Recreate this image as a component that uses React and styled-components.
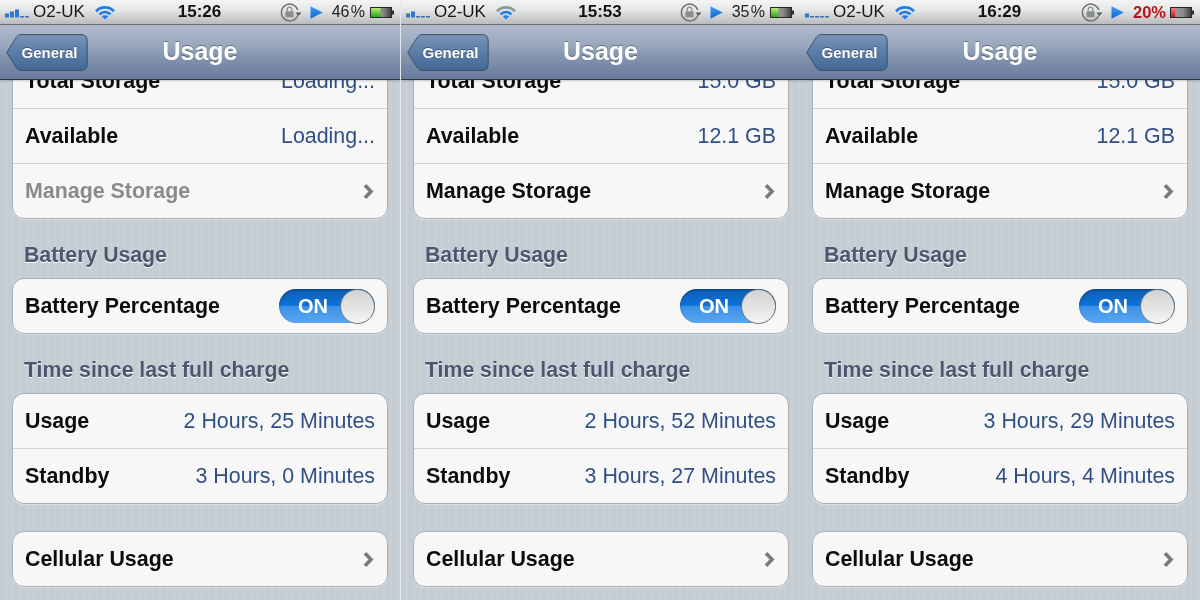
import React from "react";
import styled, { createGlobalStyle } from "styled-components";

const Global = createGlobalStyle`
  html, body { margin: 0; padding: 0; background: #c5ccd4; }
  body { font-family: "Liberation Sans", Arial, sans-serif; overflow: hidden; }
`;

const Page = styled.div`
  display: grid;
  grid-template-columns: 400px 400px 400px;
  width: 1200px;
  height: 600px;
  overflow: hidden;
  filter: blur(0.35px);
`;

const Phone = styled.section`
  display: flex;
  flex-direction: column;
  height: 600px;
  min-width: 0;
  overflow: hidden;
  box-sizing: border-box;
  border-left: ${(p) => (p.$divided ? "1px solid #e4e8ec" : "0")};
  background: repeating-linear-gradient(90deg, #c4ccd4 0 5px, #c9d0d6 5px 7px);
`;

const StatusBar = styled.header`
  flex: none;
  position: relative;
  z-index: 2;
  box-sizing: border-box;
  height: 25px;
  display: grid;
  grid-template-columns: 1fr auto 1fr;
  align-items: center;
  padding: 0 6px 1px 5px;
  background: linear-gradient(#f3f4f4, #e6e7e7 40%, #b9bbbc);
  border-bottom: 1px solid #6f7377;
  color: #1c1c1c;
  font-size: 17px;
  line-height: 24px;
`;

const StatusLeft = styled.div`
  display: flex;
  align-items: center;
  gap: 3px;
`;

const StatusRight = styled.div`
  display: flex;
  align-items: center;
  justify-content: flex-end;
`;

const Carrier = styled.span`
  margin-right: 7px;
  color: #161616;
`;

const Clock = styled.time`
  font-weight: 700;
  font-size: 17px;
  color: #111;
`;

const Percent = styled.span`
  margin: 0 ${(p) => (p.$low ? "4px" : "5px")} 0 9px;
  font-size: ${(p) => (p.$low ? "16.5px" : "16px")};
  color: ${(p) => (p.$low ? "#b5141c" : "#222")};
  font-weight: ${(p) => (p.$low ? 700 : 400)};
`;

const PlayIcon = styled.svg`
  margin-left: 8px;
`;

const NavBar = styled.nav`
  flex: none;
  position: relative;
  z-index: 2;
  box-sizing: border-box;
  height: 55px;
  display: grid;
  grid-template-columns: 1fr auto 1fr;
  align-items: center;
  padding: 0 6px;
  background: linear-gradient(#b1bccd, #98a6bc 40%, #8697b1 55%, #667a9b);
  border-bottom: 1px solid #2d3642;
  box-shadow: 0 1px 2px rgba(0, 0, 0, 0.2);
`;

const BackButton = styled.button`
  position: relative;
  justify-self: start;
  width: 82px;
  height: 37px;
  padding: 0 0 0 5px;
  border: 0;
  background: none;
  font: 700 15px "Liberation Sans", Arial, sans-serif;
  color: #fff;
  text-shadow: 0 -1px 0 rgba(30, 45, 70, 0.55);
`;

const BackShape = styled.svg`
  position: absolute;
  inset: 0;
`;

const BackLabel = styled.span`
  position: relative;
`;

const Title = styled.h1`
  margin: 0 0 1px;
  font-size: 25px;
  font-weight: 700;
  color: #fff;
  text-shadow: 0 -1px 0 rgba(40, 55, 80, 0.5);
`;

const Scroller = styled.main`
  flex: 1;
  min-height: 0;
  display: flex;
  flex-direction: column;
  margin-top: -27px;
  padding: 0 ${(p) => (p.$divided ? "11px" : "12px")} 0 12px;
`;

const Card = styled.div`
  flex: none;
  border: 1px solid #a9afb6;
  border-radius: 12px;
  background: #f7f7f7;
  box-shadow: 0 1px 0 rgba(255, 255, 255, 0.35);
`;

const Row = styled.div`
  display: flex;
  align-items: center;
  justify-content: space-between;
  box-sizing: border-box;
  height: ${(p) => (p.$first ? "54px" : "55px")};
  padding: 0 12px;
  border-top: ${(p) => (p.$first ? "0" : "1px solid #d3d3d3")};
`;

const Label = styled.span`
  font-size: 21.4px;
  font-weight: 700;
  color: ${(p) => (p.$muted ? "#8a8a8a" : "#0c0c0c")};
`;

const Value = styled.span`
  font-size: 21.4px;
  color: #304f85;
`;

const Heading = styled.h2`
  margin: 0;
  padding: 24px 12px 11px;
  font-size: 21.25px;
  line-height: 24px;
  font-weight: 700;
  color: #4c566e;
  text-shadow: 0 1px 0 #fff;
`;

const Spacer = styled.div`
  flex: none;
  height: 27px;
`;

const Toggle = styled.div`
  position: relative;
  box-sizing: border-box;
  width: 96px;
  height: 34px;
  padding-right: 28px;
  display: flex;
  align-items: center;
  justify-content: center;
  border-radius: 17px;
  background: linear-gradient(#0a5fb8, #0f72d8 48%, #3c91ea 52%, #5aa5f0);
  color: #fff;
  font-size: 20px;
  font-weight: 700;
  box-shadow: inset 0 1px 2px rgba(0, 0, 0, 0.4);
`;

const Knob = styled.span`
  position: absolute;
  top: -0.5px;
  right: 0;
  box-sizing: border-box;
  width: 35px;
  height: 35px;
  border-radius: 50%;
  border: 1px solid #74787c;
  background: linear-gradient(#d2d2d2, #f4f4f4);
`;

const Chevron = styled.svg`
  margin-right: 1px;
`;

function Signal({ bars }) {
  const heights = [4, 6, 8, 10, 12];
  return (
    <svg width="25" height="14" viewBox="0 0 25 14">
      {heights.map((h, i) =>
        i < bars ? (
          <rect key={i} x={i * 5} y={12.5 - h} width="4" height={h} fill="#2b78d0" />
        ) : (
          <rect key={i} x={i * 5} y={11} width="4" height="1.5" fill="#3d6fa8" />
        )
      )}
    </svg>
  );
}

function Wifi({ faint }) {
  const outer = faint ? "#8f979e" : "#1f7fe0";
  return (
    <svg width="20" height="15" viewBox="0 0 20 15" fill="none" strokeWidth="2.7">
      <path d="M1 6.2 C6 1 14 1 19 6.2" stroke={outer} />
      <path d="M4.5 9.4 C7.8 6.2 12.2 6.2 15.5 9.4" stroke="#1f7fe0" />
      <path d="M10 14.4 L6.8 11.2 C8.6 9.8 11.4 9.8 13.2 11.2 Z" fill="#1f7fe0" stroke="none" />
    </svg>
  );
}

function RotationLock() {
  return (
    <svg width="22" height="19" viewBox="0 0 22 19" fill="none">
      <path d="M17.6 12.6 A8.4 8.4 0 1 1 17.8 7" stroke="#6c6f72" strokeWidth="1.4" />
      <path d="M15.4 9.6 L21.4 9.6 L18.4 13 Z" fill="#55585b" />
      <rect x="5.4" y="8.2" width="8.2" height="6" rx="0.8" fill="#8a8d90" />
      <path d="M7.2 8.2 V6.4 a2.3 2.3 0 0 1 4.6 0 V8.2" stroke="#8a8d90" strokeWidth="1.3" />
    </svg>
  );
}

function Play() {
  return (
    <PlayIcon width="13" height="13" viewBox="0 0 13 13">
      <defs>
        <linearGradient id="play" x1="0" y1="0" x2="0" y2="1">
          <stop offset="0" stopColor="#3d9cf5" />
          <stop offset="1" stopColor="#1468d0" />
        </linearGradient>
      </defs>
      <path d="M0.5 0.3 L12.8 6.5 L0.5 12.7 Z" fill="url(#play)" />
    </PlayIcon>
  );
}

function Battery({ level, low }) {
  const w = (level / 100) * 21;
  const gid = low ? "drain" : "charge";
  return (
    <svg width="24" height="11" viewBox="0 0 24 11">
      <defs>
        <linearGradient id="cell" x1="0" y1="0" x2="1" y2="0">
          <stop offset="0" stopColor="#a2a2a2" />
          <stop offset="0.6" stopColor="#8a8a8a" />
          <stop offset="1" stopColor="#3c3c3c" />
        </linearGradient>
        <linearGradient id="charge" x1="0" y1="0" x2="0" y2="1">
          <stop offset="0" stopColor="#b8ec80" />
          <stop offset="1" stopColor="#2ea612" />
        </linearGradient>
        <linearGradient id="drain" x1="0" y1="0" x2="0" y2="1">
          <stop offset="0" stopColor="#f08080" />
          <stop offset="1" stopColor="#c81818" />
        </linearGradient>
      </defs>
      <rect x="0.5" y="0.5" width="21" height="10" fill="url(#cell)" stroke="#262626" />
      <rect x="1" y="1" width={w} height="9" fill={`url(#${gid})`} />
      <rect x="22" y="3.5" width="2" height="4" fill="#2c2c2c" />
    </svg>
  );
}

function ChevronIcon() {
  return (
    <Chevron width="11" height="17" viewBox="0 0 11 17" fill="none">
      <path d="M2 2.2 L8 8.5 L2 14.8" stroke="#7b7b7b" strokeWidth="3.6" />
    </Chevron>
  );
}

function BackBody() {
  return (
    <BackShape width="82" height="37" viewBox="0 0 82 37">
      <defs>
        <linearGradient id="back" x1="0" y1="0" x2="0" y2="1">
          <stop offset="0" stopColor="#7a95b8" />
          <stop offset="0.5" stopColor="#5a7ca6" />
          <stop offset="1" stopColor="#436895" />
        </linearGradient>
      </defs>
      <path
        d="M0.7 18.5 L10.5 3 Q12.3 0.6 15 0.6 L75 0.6 Q81.2 0.6 81.2 6.8 L81.2 30.2 Q81.2 36.4 75 36.4 L15 36.4 Q12.3 36.4 10.5 34 Z"
        fill="url(#back)"
        stroke="#3d4f6b"
        strokeWidth="1"
      />
    </BackShape>
  );
}

const phones = [
  { time: "15:26", bars: 3, pct: "46\u200a%", level: 46, total: "Loading...", avail: "Loading...", muted: true, usage: "2 Hours, 25 Minutes", standby: "3 Hours, 0 Minutes" },
  { time: "15:53", bars: 2, faint: true, pct: "35\u200a%", level: 35, total: "15.0 GB", avail: "12.1 GB", usage: "2 Hours, 52 Minutes", standby: "3 Hours, 27 Minutes", divided: true },
  { time: "16:29", bars: 1, pct: "20%", level: 20, low: true, total: "15.0 GB", avail: "12.1 GB", usage: "3 Hours, 29 Minutes", standby: "4 Hours, 4 Minutes" },
];

function PhoneView({ d }) {
  return (
    <Phone $divided={d.divided}>
      <StatusBar>
        <StatusLeft>
          <Signal bars={d.bars} />
          <Carrier>O2-UK</Carrier>
          <Wifi faint={d.faint} />
        </StatusLeft>
        <Clock>{d.time}</Clock>
        <StatusRight>
          <RotationLock />
          <Play />
          <Percent $low={d.low}>{d.pct}</Percent>
          <Battery level={d.level} low={d.low} />
        </StatusRight>
      </StatusBar>
      <NavBar>
        <BackButton>
          <BackBody />
          <BackLabel>General</BackLabel>
        </BackButton>
        <Title>Usage</Title>
      </NavBar>
      <Scroller $divided={d.divided}>
        <Card>
          <Row $first>
            <Label>Total Storage</Label>
            <Value>{d.total}</Value>
          </Row>
          <Row>
            <Label>Available</Label>
            <Value>{d.avail}</Value>
          </Row>
          <Row>
            <Label $muted={d.muted}>Manage Storage</Label>
            <ChevronIcon />
          </Row>
        </Card>
        <Heading>Battery Usage</Heading>
        <Card>
          <Row $first>
            <Label>Battery Percentage</Label>
            <Toggle>
              ON
              <Knob />
            </Toggle>
          </Row>
        </Card>
        <Heading>Time since last full charge</Heading>
        <Card>
          <Row $first>
            <Label>Usage</Label>
            <Value>{d.usage}</Value>
          </Row>
          <Row>
            <Label>Standby</Label>
            <Value>{d.standby}</Value>
          </Row>
        </Card>
        <Spacer />
        <Card>
          <Row $first>
            <Label>Cellular Usage</Label>
            <ChevronIcon />
          </Row>
        </Card>
      </Scroller>
    </Phone>
  );
}

export default function App() {
  return (
    <>
      <Global />
      <Page>
        {phones.map((d) => (
          <PhoneView key={d.time} d={d} />
        ))}
      </Page>
    </>
  );
}
